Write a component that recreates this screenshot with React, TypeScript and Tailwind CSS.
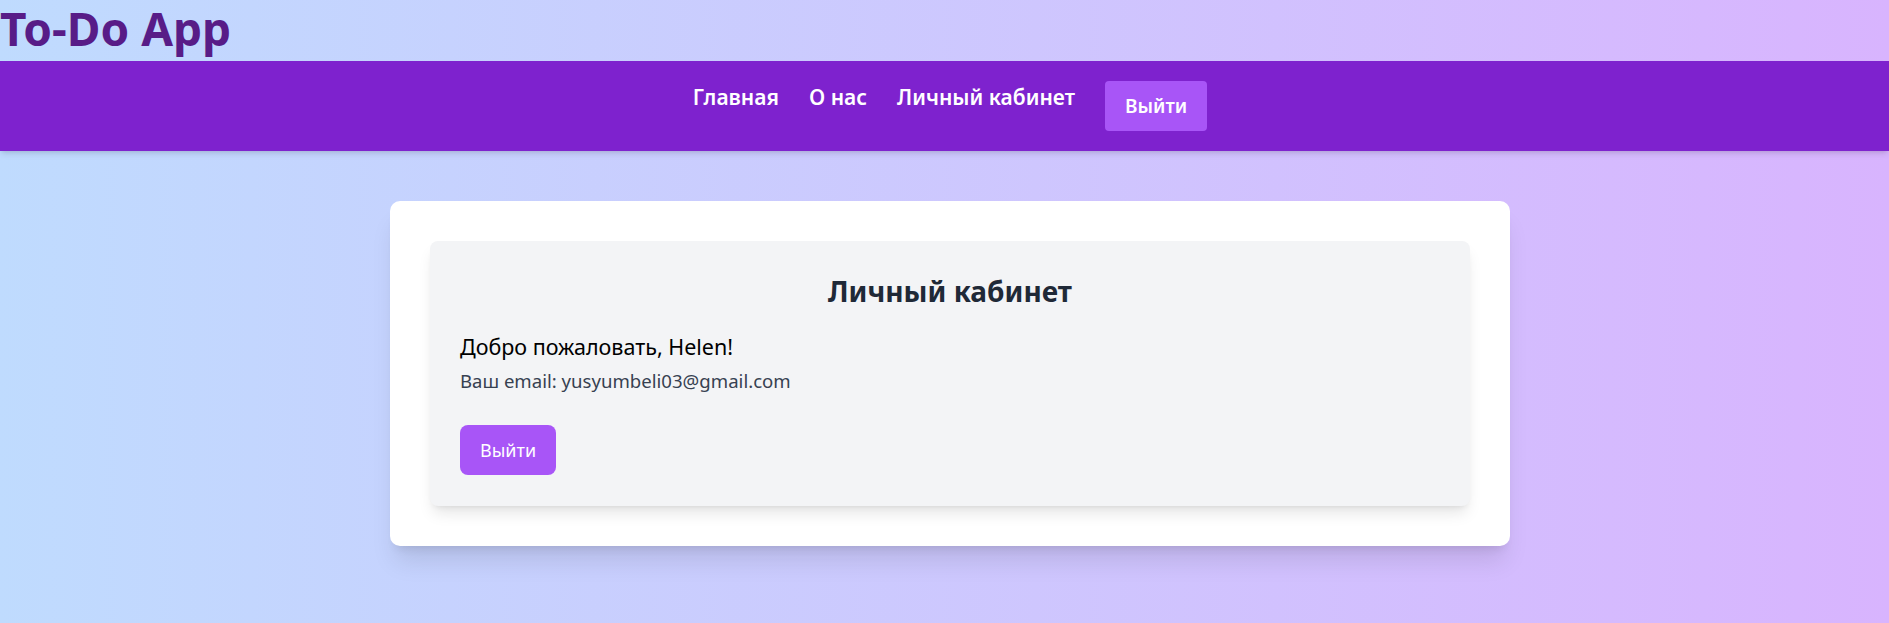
export default function App() {
  return (
    <div className="min-h-screen bg-gradient-to-r from-[#bfdbfe] to-[#d8b4fe] font-['Noto_Sans',sans-serif]">
      <header>
        <h1 className="h-[61px] pt-[5px] text-[46px] leading-none font-bold text-[#581c87]">
          To-Do App
        </h1>
        <nav className="h-[90px] bg-[#7e22ce] shadow-md flex justify-center pt-[20px] pl-[11px]">
          <ul className="flex items-start gap-[30px]">
            <li className="pt-[2px]">
              <a href="#" className="text-[21px] leading-7 font-semibold text-white">
                Главная
              </a>
            </li>
            <li className="pt-[2px]">
              <a href="#" className="text-[21px] leading-7 font-semibold text-white">
                О нас
              </a>
            </li>
            <li className="pt-[2px]">
              <a href="#" className="text-[21px] leading-7 font-semibold text-white">
                Личный кабинет
              </a>
            </li>
            <li>
              <button className="h-[50px] px-5 rounded bg-[#a855f7] text-[19px] leading-7 font-semibold text-white">
                Выйти
              </button>
            </li>
          </ul>
        </nav>
      </header>

      <main className="flex justify-center pt-[50px] pl-[11px]">
        <div className="w-[1120px] bg-white rounded-[10px] shadow-xl p-10">
          <div className="bg-[#f3f4f6] rounded-lg shadow-lg pt-8 px-[30px] pb-[31px]">
            <h2 className="text-center text-[28px] leading-9 font-bold text-[#1f2937] mb-6">
              Личный кабинет
            </h2>
            <p className="text-[21.5px] leading-7 text-black">Добро пожаловать, Helen!</p>
            <p className="mt-1.5 text-[18.6px] leading-7 text-[#374151]">
              Ваш email: yusyumbeli03@gmail.com
            </p>
            <button className="mt-[30px] h-[50px] px-5 rounded-lg bg-[#a855f7] text-lg leading-7 text-white">
              Выйти
            </button>
          </div>
        </div>
      </main>
    </div>
  );
}
